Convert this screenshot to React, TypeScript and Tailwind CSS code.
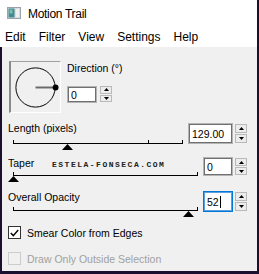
import React from 'react';

type SliderProps = {
  width: number;
  ticks: number[];
  thumb: number;
  lineTop: string;
};

function Slider({ width, ticks, thumb, lineTop }: SliderProps) {
  return (
    <div className={`relative ${lineTop}`}>
      <div className="relative ml-[5px] h-px bg-black" style={{ width }}>
        {ticks.map((t) => (
          <div key={t} className="absolute bottom-0 h-[4px] w-px bg-black" style={{ left: t }} />
        ))}
        <svg
          className="absolute top-[1px]"
          style={{ left: thumb - 5 }}
          width="11"
          height="6"
          viewBox="0 0 11 6"
        >
          <path d="M5.5 0L11 6H0z" fill="#000" />
        </svg>
      </div>
    </div>
  );
}

function Spinner({ className }: { className: string }) {
  return (
    <div className={`flex w-[12px] flex-col gap-px ${className}`}>
      <div className="flex flex-1 items-center justify-center border border-[#b9b9b9] bg-[#ececec]">
        <svg width="5" height="3" viewBox="0 0 5 3">
          <path d="M2.5 0L5 3H0z" fill="#000" />
        </svg>
      </div>
      <div className="flex flex-1 items-center justify-center border border-[#b9b9b9] bg-[#ececec]">
        <svg width="5" height="3" viewBox="0 0 5 3">
          <path d="M0 0H5L2.5 3z" fill="#000" />
        </svg>
      </div>
    </div>
  );
}

function NumberBox({ value, className }: { value: string; className: string }) {
  return (
    <div className={`border border-[#b4b4b4] bg-white ${className}`}>
      <div className="flex h-full items-center border border-[#707070] pl-[2px] text-[10.5px] text-black">
        {value}
      </div>
    </div>
  );
}

export default function App() {
  return (
    <div className="flex h-[274px] w-[259px] flex-col border-r-2 border-b-[3px] border-[#1b1030] bg-[#f0f0f0] font-['Liberation_Sans',Arial,sans-serif] text-black">
      {/* title bar */}
      <div className="flex h-[27px] items-center bg-white pl-[7px]">
        <svg width="14" height="12" viewBox="0 0 14 12" className="mb-[1px]">
          <rect x="0.5" y="0.5" width="13" height="11" fill="#d9dde1" stroke="#9aa3ab" />
          <rect x="1.5" y="1.5" width="6" height="9" fill="#3f8a94" />
          <rect x="2.5" y="2.5" width="3" height="4" fill="#7fc0a8" />
          <rect x="9" y="2" width="3" height="8" fill="#eef0f2" />
        </svg>
        <span className="ml-[7px] text-[12px] tracking-[-0.3px] text-black">Motion Trail</span>
      </div>

      {/* menu bar */}
      <div className="flex h-[20px] items-center gap-[13px] bg-white pl-[5px] text-[12px]">
        <span>Edit</span>
        <span>Filter</span>
        <span>View</span>
        <span>Settings</span>
        <span>Help</span>
      </div>

      {/* client */}
      <div className="relative flex flex-1 flex-col border-l-2 border-[#1b1030] pl-[6px] text-[10.5px] leading-[14px]">
        {/* direction */}
        <div className="mt-[14px] flex h-[52px]">
          <div className="ml-[1px] flex h-[52px] w-[52px] items-center justify-center border-t border-l-2 border-t-[#a0a0a0] border-l-[#8a8a8a] border-r border-b border-r-white border-b-white">
            <svg width="50" height="50" viewBox="0 0 50 50">
              <circle cx="25" cy="25.5" r="20" fill="none" stroke="#000" strokeWidth="1" />
              <line x1="25" y1="25.5" x2="45" y2="25.5" stroke="#6a6a6a" strokeWidth="2" />
              <circle cx="45.5" cy="25.5" r="3" fill="#000" />
            </svg>
          </div>
          <div className="ml-[6px] flex flex-col">
            <span className="h-[14px]">Direction (°)</span>
            <div className="mt-[11px] flex items-start">
              <NumberBox value="0" className="h-[17px] w-[30px]" />
              <Spinner className="ml-[3px] h-[16px]" />
            </div>
          </div>
        </div>

        {/* length */}
        <div className="mt-[8px] flex h-[35px]">
          <div className="flex w-[180px] flex-col">
            <span className="h-[14px]">Length (pixels)</span>
            <Slider width={170} ticks={[0, 135, 169]} thumb={54} lineTop="mt-[8px]" />
          </div>
          <div className="mt-[2px] flex items-start">
            <NumberBox value="129.00" className="h-[21px] w-[45px]" />
            <Spinner className="ml-[2px] mt-[1px] h-[19px]" />
          </div>
        </div>

        {/* taper */}
        <div className="flex h-[34px]">
          <div className="flex w-[195px] flex-col">
            <span className="h-[14px]">Taper</span>
            <Slider width={185} ticks={[0, 184]} thumb={0} lineTop="mt-[5px]" />
          </div>
          <div className="mt-[1px] flex items-start">
            <NumberBox value="0" className="h-[19px] w-[30px]" />
            <Spinner className="ml-[2px] mt-[1px] h-[17px]" />
          </div>
        </div>
        <span className="absolute left-[50px] top-[113px] font-['Liberation_Mono',monospace] text-[8px] leading-[10px] font-bold tracking-[1.5px] text-[#222]">
          ESTELA-FONSECA.COM
        </span>

        {/* opacity */}
        <div className="flex h-[36px]">
          <div className="flex w-[195px] flex-col">
            <span className="h-[14px]">Overall Opacity</span>
            <Slider width={185} ticks={[0, 184]} thumb={175} lineTop="mt-[6px]" />
          </div>
          <div className="mt-[1px] flex items-start">
            <div className="h-[21px] w-[30px] border border-[#0078d7] bg-white">
              <div className="flex h-full items-center border border-[#5a9fe0] pl-[2px] text-[10.5px]">
                52<span className="ml-px h-[12px] w-px bg-black" />
              </div>
            </div>
            <Spinner className="ml-[2px] mt-[1px] h-[19px]" />
          </div>
        </div>

        {/* checkboxes */}
        <div className="flex h-[13px] items-center">
          <div className="flex h-[13px] w-[13px] items-center justify-center border border-[#333] bg-white">
            <svg width="9" height="8" viewBox="0 0 9 8">
              <path d="M0.8 4L3.3 6.6L8.2 1" fill="none" stroke="#000" strokeWidth="1.4" />
            </svg>
          </div>
          <span className="ml-[6px]">Smear Color from Edges</span>
        </div>
        <div className="mt-[13px] flex h-[13px] items-center">
          <div className="h-[13px] w-[13px] border border-[#cccccc]" />
          <span className="ml-[6px] text-[#a0a0a0]">Draw Only Outside Selection</span>
        </div>
      </div>
    </div>
  );
}
